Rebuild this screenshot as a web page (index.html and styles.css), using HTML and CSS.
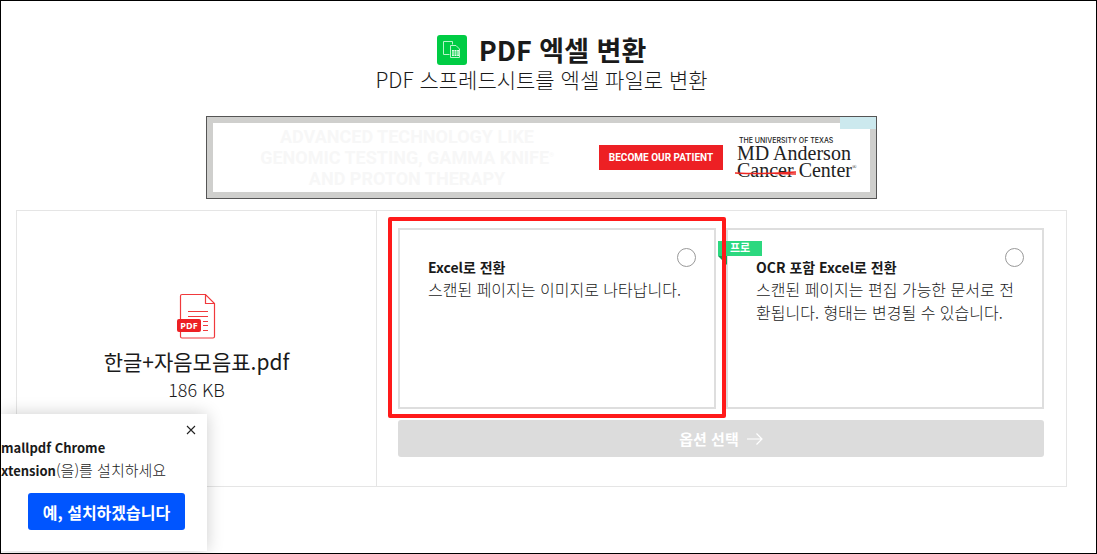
FILE: index.html
```html
<!DOCTYPE html>
<html lang="ko">
<head>
<meta charset="utf-8">
<meta name="viewport" content="width=device-width, initial-scale=1">
<title>PDF 엑셀 변환</title>
<link rel="stylesheet" href="styles.css">
</head>
<body>
<div class="page">
  <header class="header">
    <h1 class="title">
      <svg class="title-icon" viewBox="0 0 30 30" aria-hidden="true">
        <rect width="30" height="30" rx="3" fill="#00cc44"/>
        <g fill="none" stroke="#b8f5c9">
          <path d="M12.500 19.500H6.500V6.500H15.500V9.500"/>
          <path d="M13.500 10.500H19L22.500 14V22.500H13.500Z"/>
        </g>
        <path fill="#e6fdec" d="M15 15h7v6h-7z"/>
        <path stroke="#00cc44" stroke-width=".6" d="M15 17h7M15 19h7M17.300 15v6M19.700 15v6"/>
      </svg>
      <span>PDF 엑셀 변환</span>
    </h1>
    <p class="subtitle">PDF 스프레드시트를 엑셀 파일로 변환</p>
  </header>

  <aside class="ad">
    <div class="ad-inner">
      <p class="ad-copy">ADVANCED TECHNOLOGY LIKE<br>GENOMIC TESTING, GAMMA KNIFE<sup>®</sup><br>AND PROTON THERAPY</p>
      <a class="ad-cta" href="#">BECOME OUR PATIENT</a>
      <div class="ad-brand">
        <span class="ad-univ">THE UNIVERSITY OF TEXAS</span>
        <span class="ad-name">MD Anderson</span>
        <span class="ad-name"><span class="ad-cancer">Cancer<svg class="ad-strike" viewBox="0 0 62 4" preserveAspectRatio="none" aria-hidden="true"><path d="M0 2Q30 3.500 61 1M40 2.500L61 3" fill="none" stroke="#ee2724" stroke-width="1.600"/></svg></span> Center<sup>®</sup></span>
      </div>
    </div>
    <span class="ad-choice"></span>
  </aside>

  <main class="panel">
    <section class="file">
      <svg class="file-icon" viewBox="0 0 40 46" aria-hidden="true">
        <path d="M28.500 1.500H5Q3.500 1.500 3.500 3V43.500Q3.500 45 5 45H36Q37.500 45 37.500 43.500V10.500Z M28.500 1.500V10.500H37.500" fill="none" stroke="#f0393c" stroke-width="1.200"/>
        <path d="M11 18.500H31M11 23.500H31M26 28.500H31M26 32.500H31M26 37.500H31" stroke="#f0393c"/>
        <rect y="26" width="24" height="13" rx="2" fill="#ed2024"/>
        <text class="file-tag" x="12" y="36" text-anchor="middle">PDF</text>
      </svg>
      <p class="file-name">한글+자음모음표.pdf</p>
      <p class="file-size">186 KB</p>
    </section>
    <form class="options">
      <div class="cards">
        <label class="card" for="plain">
          <span class="card-head"><span class="card-title">Excel로 전환</span><input class="radio" id="plain" type="radio" name="mode"></span>
          <span class="card-text">스캔된 페이지는 이미지로 나타납니다.</span>
          <span class="highlight"></span>
        </label>
        <label class="card" for="ocr">
          <span class="ribbon">프로</span>
          <span class="card-head"><span class="card-title">OCR 포함 Excel로 전환</span><input class="radio" id="ocr" type="radio" name="mode"></span>
          <span class="card-text">스캔된 페이지는 편집 가능한 문서로 전환됩니다. 형태는 변경될 수 있습니다.</span>
        </label>
      </div>
      <button class="choose" type="button">옵션 선택
        <svg class="arrow" viewBox="0 0 16 12" aria-hidden="true"><path d="M0 6H15M9.500 .5L15 6L9.500 11.500" fill="none" stroke="#fff" stroke-width="1.200"/></svg>
      </button>
    </form>
  </main>

  <div class="popup">
    <button class="close" type="button" aria-label="닫기">
      <svg class="close-icon" viewBox="0 0 10 10" aria-hidden="true"><path d="M1 1L9 9M9 1L1 9" stroke="#222" stroke-width="1.100"/></svg>
    </button>
    <p class="popup-text"><b>mallpdf Chrome<br>xtension</b>(을)를 설치하세요</p>
    <button class="install" type="button">예, 설치하겠습니다</button>
  </div>
</div>
</body>
</html>
```
FILE: styles.css
```css
* {
  box-sizing: border-box;
}

body {
  margin: 0;
  background: #fff;
  color: #1a1a1a;
  font-family: "Noto Sans CJK KR", sans-serif;
}

h1,
p {
  margin: 0;
}

button {
  border: 0;
  font-family: inherit;
  cursor: pointer;
}

.page {
  position: relative;
  min-height: 100vh;
  overflow: hidden;
  padding: 32px 29px 16px 15px;
  border: 1px solid #000;
}

.header {
  text-align: center;
}

.title {
  display: flex;
  justify-content: center;
  align-items: center;
  gap: 12px;
  font-size: 27px;
  line-height: 34px;
  font-weight: 700;
}

.title-icon {
  width: 30px;
  height: 30px;
}

.subtitle {
  font-size: 21px;
  line-height: 24px;
  font-weight: 300;
}

.ad {
  position: relative;
  max-width: 671px;
  margin: 25px auto 11px;
  padding: 6px;
  border: 1px solid #555;
  background: #cfcfcd;
}

.ad-inner {
  display: grid;
  grid-template-columns: 1fr 124px 123px;
  align-items: center;
  column-gap: 14px;
  height: 69px;
  padding: 0 10px;
  background: #fff;
}

.ad-copy {
  padding-left: 6px;
  color: #f7f7f7;
  font-family: Roboto, sans-serif;
  font-size: 18px;
  line-height: 21px;
  font-weight: 700;
  text-align: center;
}

.ad-copy sup,
.ad-name sup {
  font-size: 6px;
  line-height: 1;
}

.ad-cta {
  background: #ed2024;
  color: #fff;
  font-family: Roboto, sans-serif;
  font-size: 10px;
  line-height: 25px;
  font-weight: 700;
  text-align: center;
  text-decoration: none;
}

.ad-brand {
  display: flex;
  flex-direction: column;
  color: #222;
  white-space: nowrap;
}

.ad-univ {
  padding-left: 2px;
  font-family: Inter, sans-serif;
  font-size: 7px;
  line-height: 8px;
  font-weight: 500;
}

.ad-name {
  font-family: "Liberation Serif", serif;
  font-size: 20px;
  line-height: 17px;
}

.ad-cancer {
  position: relative;
}

.ad-strike {
  position: absolute;
  left: -2px;
  top: 12px;
  width: 62px;
  height: 4px;
}

.ad-choice {
  position: absolute;
  top: 0;
  right: 0;
  width: 36px;
  height: 12px;
  background: #cce9ee;
}

.panel {
  display: grid;
  grid-template-columns: 360px 1fr;
  border: 1px solid #e5e5e5;
}

.file {
  display: flex;
  flex-direction: column;
  align-items: center;
  padding-top: 82px;
  border-right: 1px solid #e5e5e5;
}

.file-icon {
  width: 40px;
  height: 46px;
}

.file-tag {
  fill: #fff;
  font-family: "Open Sans", sans-serif;
  font-size: 9px;
  font-weight: 700;
}

.file-name {
  margin-top: 8px;
  font-size: 21px;
  line-height: 28px;
}

.file-size {
  font-size: 18px;
  line-height: 28px;
  font-weight: 300;
}

.options {
  display: flex;
  flex-direction: column;
  gap: 11px;
  padding: 17px 22px 29px 21px;
}

.cards {
  display: grid;
  grid-template-columns: 1fr 1fr;
  gap: 10px;
}

.card {
  position: relative;
  min-height: 181px;
  padding: 18px 18px 18px 28px;
  border: 2px solid #dedede;
}

.card-head {
  display: flex;
  justify-content: space-between;
  align-items: flex-start;
}

.card-title {
  padding-top: 8px;
  font-size: 14px;
  line-height: 22px;
  font-weight: 700;
}

.card-text {
  display: block;
  padding-right: 10px;
  font-size: 16px;
  line-height: 23px;
  font-weight: 300;
}

.radio {
  appearance: none;
  width: 19px;
  height: 19px;
  margin: 0;
  border: 1px solid #999;
  border-radius: 50%;
  background: #fff;
}

.highlight {
  position: absolute;
  z-index: 2;
  inset: -13px -12px -11px -12px;
  border: 4px solid #ff1a1a;
  border-radius: 2px;
  pointer-events: none;
}

.ribbon {
  position: absolute;
  top: 11px;
  left: -10px;
  width: 44px;
  height: 15px;
  background: #2cd87f;
  color: #fff;
  font-size: 11px;
  line-height: 13px;
  font-weight: 700;
  text-align: center;
}

.ribbon::after {
  content: "";
  position: absolute;
  top: 100%;
  left: 0;
  border-top: 9px solid #159a55;
  border-left: 9px solid transparent;
}

.choose {
  display: flex;
  justify-content: center;
  align-items: center;
  gap: 8px;
  height: 37px;
  border-radius: 3px;
  background: #dcdcdc;
  color: #fff;
  font-size: 15px;
  font-weight: 700;
}

.arrow {
  width: 16px;
  height: 12px;
}

.popup {
  position: absolute;
  z-index: 3;
  left: 0;
  bottom: 2px;
  width: 206px;
  height: 137px;
  padding: 22px 22px 22px 0;
  background: #fff;
  box-shadow: 0 0 16px rgba(0, 0, 0, 0.2);
}

.popup-text {
  font-size: 15px;
  line-height: 22px;
  font-weight: 300;
}

.popup-text b {
  font-size: 13px;
  font-weight: 700;
}

.close {
  position: absolute;
  top: 10px;
  right: 10px;
  padding: 1px;
  background: none;
}

.close-icon {
  display: block;
  width: 10px;
  height: 10px;
}

.install {
  display: block;
  width: 157px;
  height: 37px;
  margin: 11px 0 0 auto;
  padding: 0;
  border-radius: 3px;
  background: #0055ff;
  color: #fff;
  font-size: 16px;
  font-weight: 700;
}
```
